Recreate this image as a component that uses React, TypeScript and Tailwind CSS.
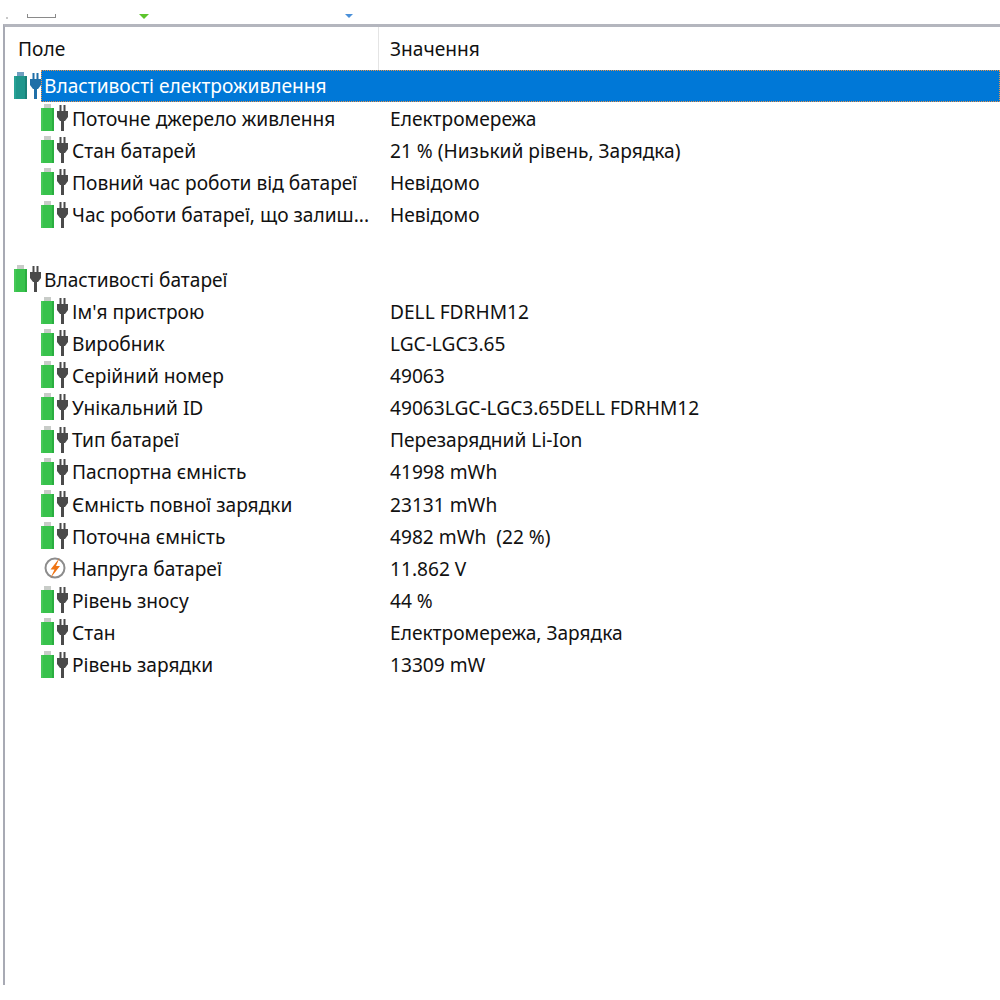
import React from 'react';

const Power: React.FC<{ teal?: boolean }> = ({ teal }) => (
  <svg width="28" height="28" viewBox="0 0 28 28" className="shrink-0">
    <rect x="3" y="0" width="7" height="4" fill={teal ? '#6f9fc0' : '#c8ccc8'} />
    <rect x="0" y="4" width="13" height="23" fill={teal ? '#1f968c' : '#38c24c'} />
    <rect x="0" y="4" width="2" height="23" fill={teal ? '#28a296' : '#46c858'} />
    <rect x="11" y="4" width="2" height="23" fill={teal ? '#1a8078' : '#2aae40'} />
    <g fill={teal ? '#1f6fa8' : '#4a4a4a'}>
      <rect x="18.5" y="1" width="2" height="6" />
      <rect x="22.5" y="1" width="2" height="6" />
      <path d="M16 7h11v6l-3 4h-5l-3-4z" />
      <rect x="20" y="16" width="3" height="11" />
    </g>
  </svg>
);

const Bolt: React.FC = () => (
  <svg width="28" height="28" viewBox="0 0 28 28" className="shrink-0">
    <circle cx="14" cy="14" r="9.5" fill="#fff" stroke="#8c8c8c" strokeWidth="2" />
    <path d="M18.5 4l-9 11.5h4L9.5 24l9.5-12h-4l3.5-8z" fill="#ef7414" />
  </svg>
);

const Row: React.FC<{ label: string; value?: string; bolt?: boolean }> = ({ label, value, bolt }) => (
  <div className="flex h-[32.15px] items-center">
    <div className="flex w-[374px] items-center pl-[36px]">
      {bolt ? <Bolt /> : <Power />}
      <span className="pl-[3px] pt-[2px] whitespace-nowrap">{label}</span>
    </div>
    <span className="pl-[11px] pt-[2px] whitespace-pre">{value}</span>
  </div>
);

const first = [
  ['Поточне джерело живлення', 'Електромережа'],
  ['Стан батарей', '21 % (Низький рівень, Зарядка)'],
  ['Повний час роботи від батареї', 'Невідомо'],
  ['Час роботи батареї, що залиш...', 'Невідомо'],
];

const second = [
  ['Ім\'я пристрою', 'DELL FDRHM12'],
  ['Виробник', 'LGC-LGC3.65'],
  ['Серійний номер', '49063'],
  ['Унікальний ID', '49063LGC-LGC3.65DELL FDRHM12'],
  ['Тип батареї', 'Перезарядний Li-Ion'],
  ['Паспортна ємність', '41998 mWh'],
  ['Ємність повної зарядки', '23131 mWh'],
  ['Поточна ємність', '4982 mWh  (22 %)'],
  ['Напруга батареї', '11.862 V'],
  ['Рівень зносу', '44 %'],
  ['Стан', 'Електромережа, Зарядка'],
  ['Рівень зарядки', '13309 mW'],
];

export default function App() {
  return (
    <div className="h-[1000px] w-[1000px] overflow-hidden bg-white font-['Noto_Sans','Open_Sans',sans-serif] text-[19.15px] text-[#111]">
      <div className="relative h-[24px]">
        <div className="absolute left-[6px] top-[17px] h-[2px] w-[2px] bg-[#c8c8c8]" />
        <div className="absolute left-[27px] top-[14px] h-[4px] w-[29px] border-x border-b border-[#8a8a8a]" />
        <div className="absolute left-[139px] top-[14px] h-0 w-0 border-x-[5px] border-t-[5px] border-x-transparent border-t-[#5cc52c]" />
        <div className="absolute left-[345px] top-[14px] h-0 w-0 border-x-[4px] border-t-[4px] border-x-transparent border-t-[#4a90d9]" />
      </div>
      <div className="ml-[3px] h-[961px] border-l-2 border-t-[3px] border-l-[#a8aab4] border-t-[#b4b6be]">
        <div className="flex h-[43px] items-center">
          <div className="flex h-full w-[374px] items-center border-r border-[#e4e4e4] pl-[13px] pt-[2px]">Поле</div>
          <span className="pl-[11px] pt-[2px]">Значення</span>
        </div>
        <div className="relative flex h-[32.15px] items-center pl-[9px]">
          <Power teal />
          <div className="absolute inset-y-0 left-[36px] right-0 flex items-center border border-dotted border-[#e8944a] bg-[#0078d7] pl-[2px] text-white">
            Властивості електроживлення
          </div>
        </div>
        {first.map(([label, value]) => (
          <Row key={label} label={label} value={value} />
        ))}
        <div className="h-[32.15px]" />
        <div className="flex h-[32.15px] items-center pl-[9px]">
          <Power />
          <span className="pl-[2px] pt-[2px]">Властивості батареї</span>
        </div>
        {second.map(([label, value]) => (
          <Row key={label} label={label} value={value} bolt={label === 'Напруга батареї'} />
        ))}
      </div>
    </div>
  );
}
